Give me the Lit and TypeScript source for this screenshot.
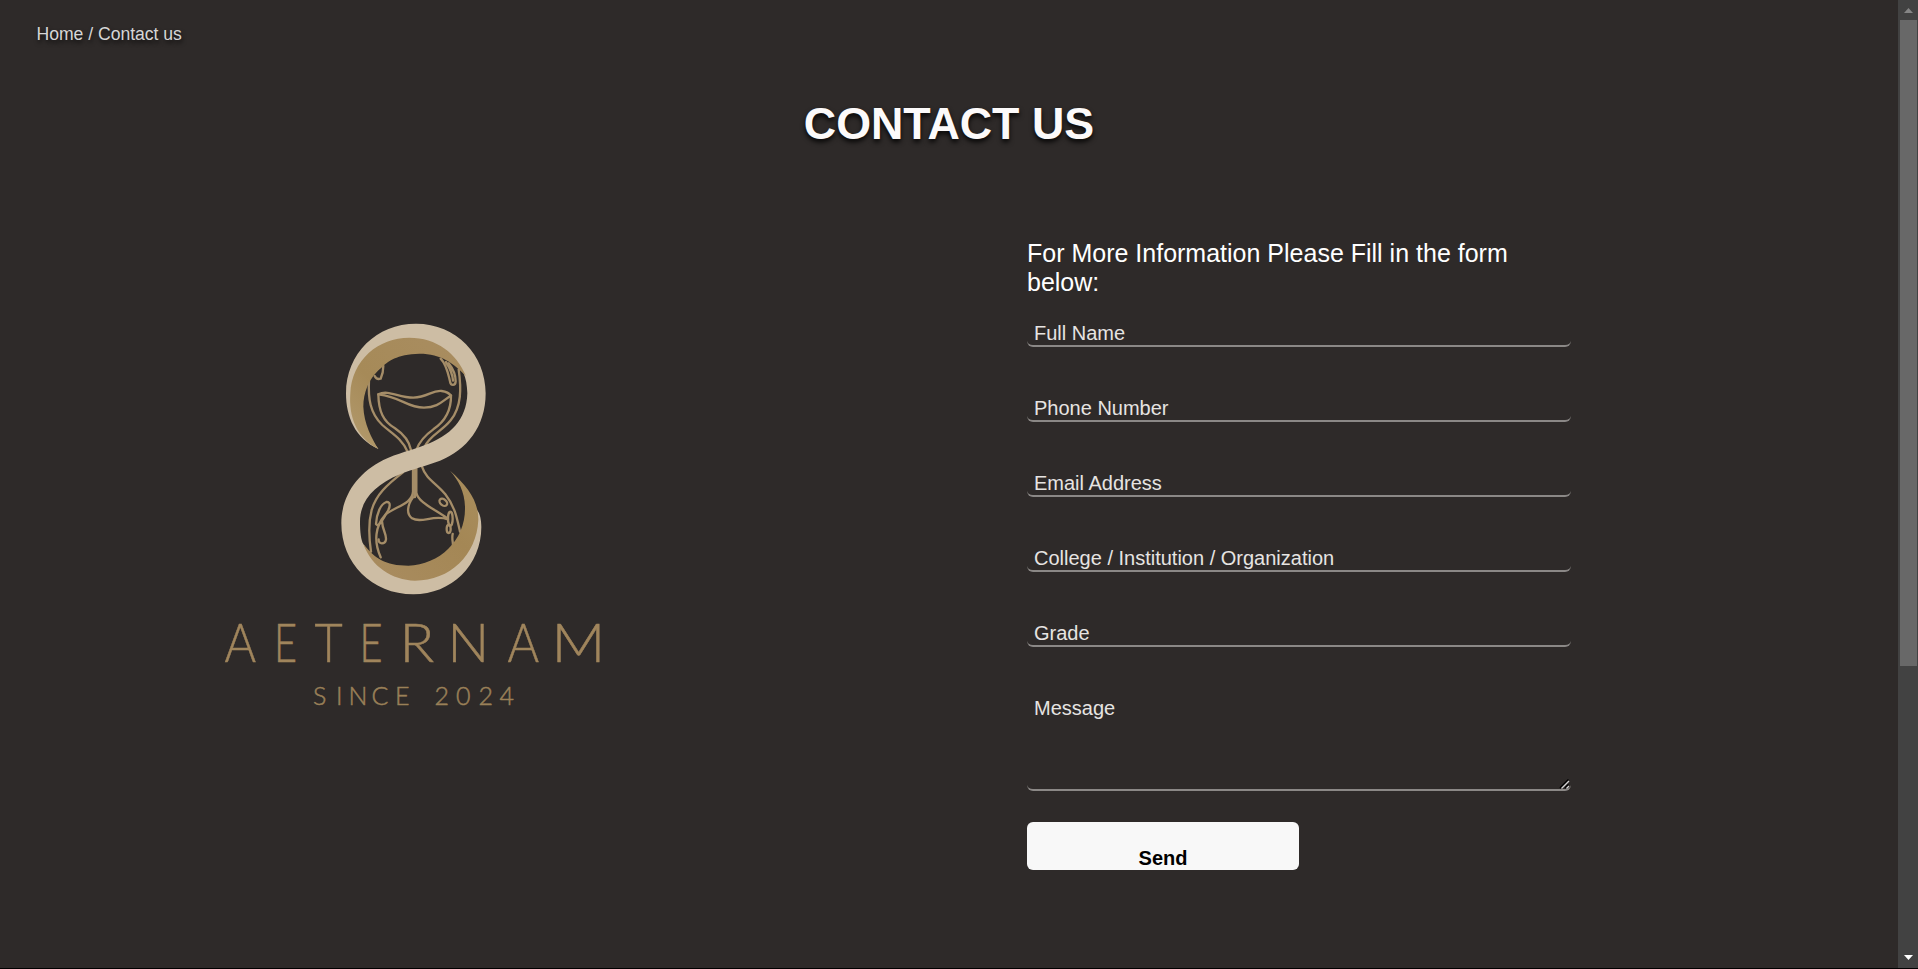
import { LitElement, html, css, svg } from "lit";
import { customElement } from "lit/decorators.js";

// Wordmark letters: glyph, left edge, horizontal stretch
const NAME: [string, number, number][] = [
  ["A", 224.5, 0.91], ["E", 274, 0.75], ["T", 314.5, 0.92], ["E", 359.5, 0.75],
  ["R", 399.5, 1.08], ["N", 447.5, 1.04], ["A", 507.5, 0.91], ["M", 551.5, 1.12],
];

@customElement("brand-logo")
export class BrandLogo extends LitElement {
  static styles = css`
    :host { display: block; width: 390px; height: 400px; }
    svg { display: block; }
    .light { fill: #cdbda4; }
    .line { fill: none; stroke: #a58d68; stroke-width: 7; stroke-linecap: round; stroke-linejoin: round; }
    .name { font: 300 53px Lato, sans-serif; fill: #a0855c; stroke: #a0855c; stroke-width: .5; }
    .since { font: 300 25px Lato, sans-serif; fill: #9a8058; stroke: #9a8058; stroke-width: .5; }
  `;
  render() {
    return html`<svg width="390" height="400" viewBox="220 310 390 400" role="img" aria-label="Aeternam">
      <defs>
        <linearGradient id="g1" x1="0" y1="1" x2="1" y2="0">
          <stop offset="0" stop-color="#b39b6e"></stop><stop offset=".4" stop-color="#a68a58"></stop><stop offset="1" stop-color="#a98d61"></stop>
        </linearGradient>
        <linearGradient id="g2" x1="0" y1="1" x2="1" y2="0">
          <stop offset="0" stop-color="#a98c60"></stop><stop offset=".6" stop-color="#a48755"></stop><stop offset="1" stop-color="#aa8f5e"></stop>
        </linearGradient>
      </defs>
      <g transform="translate(320 310) scale(.33333)">
        <g class="line">
          <path d="M147 210C144 265 150 310 187 345C215 370 245 385 262 424M175 253C176 305 190 335 225 355C250 372 268 395 273 420M393 256C394 310 370 338 340 358C312 378 298 396 290 418M416 178C424 235 425 290 392 331C365 365 330 375 314 410"></path>
          <path d="M175 253C205 238 235 263 280 263C325 261 335 240 365 243C380 245 388 250 393 257C370 270 355 293 312 293C258 292 248 262 175 253Z"></path>
          <path d="M164 198C168 207 175 208 182 206C187 195 190 182 190 168M362 146C380 164 384 190 390 214C392 228 406 228 407 214C407 195 398 175 386 160M378 156C392 178 398 195 399 212"></path>
        </g>
        <g class="line" transform="translate(0 420)">
          <path d="M248 68C200 105 168 135 155 180C144 222 147 265 153 305M306 50C318 88 350 100 376 133C405 170 411 205 420 245"></path>
          <path d="M279 50V125C277 162 225 170 196 194C165 228 161 275 182 322M289 50V128C296 160 350 180 384 207M279 142C262 165 258 192 276 205C305 222 340 192 384 208"></path>
          <path d="M284 50V140" stroke-width="9"></path>
          <path d="M168 222C170 190 182 162 199 156C214 155 210 172 202 186C190 205 182 224 173 226ZM186 214C188 242 199 250 198 268C196 284 174 284 176 268M398 252C394 270 402 280 398 300"></path>
          <ellipse cx="370" cy="157" rx="13" ry="9" transform="rotate(40 370 157)"></ellipse>
          <ellipse cx="391" cy="206" rx="7" ry="21"></ellipse><ellipse cx="386" cy="237" rx="6" ry="12"></ellipse>
        </g>
        <path class="light" d="M175 417C105 385 78 320 78 250C78 130 170 41 288 41C410 41 497 135 497 250C497 350 440 420 360 452C320 467 275 478 240 493C165 525 120 570 120 635C120 665 123 690 130 702C165 760 215 795 280 798C370 798 440 740 471 600C480 610 484 630 484 651C484 765 395 853 280 853C155 853 64 760 64 640C64 560 110 490 190 450C230 430 280 420 315 405C390 378 440 330 442 250C441 225 438 205 430 188C390 135 345 110 285 108C190 108 118 180 118 260C118 320 140 370 175 417Z"></path>
        <path fill="url(#g1)" d="M175 417C108 383 86 318 91 250C95 150 175 83 268 83C350 83 410 130 438 198C400 160 365 131 298 131C230 133 202 155 190 168C145 202 130 250 130 290C132 340 155 385 175 417Z"></path>
        <path fill="url(#g2)" d="M390 482C445 530 476 575 475 630C470 735 390 812 285 812C215 810 155 770 130 702C165 745 195 767 265 767C360 764 438 690 435 590C434 545 415 510 390 482Z"></path>
      </g>
      ${NAME.map(([c, x, s]) => svg`<text class="name" transform=${`translate(${x} 661.5) scale(${s} 1)`}>${c}</text>`)}
      <text class="since" y="705" x="313 336 348.5 371.5 395 410 434.5 456 478.5 499.5">SINCE 2024</text>
    </svg>`;
  }
}

@customElement("app-root")
export class AppRoot extends LitElement {
  static styles = css`
    * { box-sizing: border-box; }
    :host {
      display: flex; flex-direction: column; height: 969px; overflow: hidden;
      font-family: "Liberation Sans", Arial, sans-serif; background: #2e2a29; color: #fff;
    }
    .window { flex: 1; display: flex; min-height: 0; }
    main { flex: 1; }
    .edge { height: 1px; background: #000; }
    .crumbs { padding: 24px 0 0 36.5px; height: 60px; font-size: 17.6px; line-height: 20px; letter-spacing: -.02px; color: #d6d6d6; text-shadow: 1px 3px 4px rgba(0, 0, 0, .7); }
    h1 { margin: 36px 0 0; height: 54px; line-height: 54px; font-size: 44.8px; text-align: center; color: #fcfafa; text-shadow: 0 3px 5px rgba(0, 0, 0, .9); }
    .content { display: flex; padding: 89px 0 0 220px; }
    brand-logo { margin-top: 71px; }
    form { width: 544px; margin-left: 417px; display: flex; flex-direction: column; }
    h2 { margin: 0 0 23px; font-size: 25px; line-height: 29px; font-weight: 400; }
    input, textarea {
      display: block; width: 100%; border: 0; border-bottom: 2px solid #8b8886; border-radius: 6px; background: none;
      font: 20px "Liberation Sans", Arial, sans-serif; color: #fff; padding: 2px 7px 0; outline: none;
    }
    input { height: 27px; margin-bottom: 48px; }
    .message { position: relative; margin-bottom: 31px; }
    .grip { position: absolute; right: 1px; bottom: 2px; width: 11px; height: 11px; }
    textarea { height: 96px; resize: none; }
    ::placeholder { color: #e6e4e2; opacity: 1; }
    button {
      width: 272px; height: 48px; border: 0; border-radius: 6px; background: #f8f8f8; color: #000;
      font: bold 20px "Liberation Sans", Arial, sans-serif; padding: 25px 0 0;
    }
    .scrollbar { width: 20px; background: #424242; display: flex; flex-direction: column; align-items: center; }
    .thumb { width: 17px; height: 646px; background: #686868; }
    .arrow { height: 20px; width: 20px; }
    .gap { flex: 1; }
  `;
  render() {
    return html`
      <div class="window">
        <main>
          <nav class="crumbs">Home / Contact us</nav>
          <h1>CONTACT US</h1>
          <section class="content">
            <brand-logo></brand-logo>
            <form>
              <h2>For More Information Please Fill in the form below:</h2>
              ${["Full Name", "Phone Number", "Email Address", "College / Institution / Organization", "Grade"].map(
                (p) => html`<input type="text" placeholder=${p} />`
              )}
              <div class="message">
                <textarea placeholder="Message"></textarea>
                <svg class="grip" viewBox="0 0 11 11" fill="none">
                  <path d="M1 10 9.5 1.5M6 10 9.5 6.5" stroke="#000" stroke-width="1.6"></path>
                  <path d="M2.5 10.5 10 3M7.5 10.5 10 8" stroke="#d4d4d4" stroke-width="1.4"></path>
                </svg>
              </div>
              <button type="button">Send</button>
            </form>
          </section>
        </main>
        <div class="scrollbar">
          <svg class="arrow" viewBox="0 0 20 20"><path d="M6 13 10.5 8 15 13z" fill="#868686"></path></svg>
          <div class="thumb"></div>
          <div class="gap"></div>
          <svg class="arrow" viewBox="0 0 20 20"><path d="M6 7 10.5 12 15 7z" fill="#fff"></path></svg>
        </div>
      </div>
      <div class="edge"></div>
    `;
  }
}
